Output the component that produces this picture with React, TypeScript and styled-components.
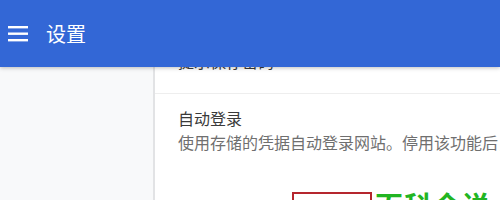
import React from 'react';
import styled, { createGlobalStyle } from 'styled-components';

const Global = createGlobalStyle`
  html, body {
    margin: 0;
    padding: 0;
    width: 500px;
    height: 200px;
    overflow: hidden;
    background: #f8f9fa;
    font-family: 'Noto Sans CJK SC', 'Liberation Sans', sans-serif;
  }
`;

const Page = styled.div`
  width: 500px;
  height: 200px;
  display: flex;
  flex-direction: column;
  position: relative;
  overflow: hidden;
`;

const Header = styled.header`
  height: 67px;
  flex: none;
  background: #3367d6;
  display: flex;
  align-items: center;
  padding-left: 8px;
  gap: 17px;
  position: relative;
  z-index: 2;
  box-shadow: 0 1px 4px rgba(0, 0, 0, 0.25);
`;

const Title = styled.h1`
  margin: 0;
  font-size: 20px;
  font-weight: 400;
  color: #ffffff;
  line-height: 1;
`;

const Body = styled.div`
  flex: 1;
  display: flex;
  min-height: 0;
`;

const Sidebar = styled.aside`
  width: 153px;
  flex: none;
  background: #f8f9fa;
`;

const Card = styled.section`
  flex: 1;
  background: #ffffff;
  border-left: 2px solid #e2e3e5;
  min-width: 0;
  overflow: hidden;
`;

// content scrolled up a little, first row sits under the header
const Scroller = styled.div`
  margin-top: -18px;
`;

const Row = styled.div<{ $divider?: boolean }>`
  padding: 0 0 0 23px;
  border-bottom: ${p => (p.$divider ? '1px solid #eeeeee' : 'none')};
`;

const FirstRow = styled(Row)`
  height: 44px;
`;

const SettingRow = styled(Row)`
  padding-top: 12px;
`;

const Label = styled.div`
  font-size: 16px;
  line-height: 24px;
  color: #3a3a3a;
  white-space: nowrap;
`;

const Sub = styled.div`
  font-size: 16px;
  line-height: 24px;
  color: #6f6f6f;
  white-space: nowrap;
`;

const Watermark = styled.div`
  position: absolute;
  left: 292px;
  top: 186px;
  display: flex;
  align-items: flex-start;
  gap: 3px;
  z-index: 3;
`;

const RedBox = styled.div`
  margin-top: 6px;
  width: 76px;
  height: 30px;
  border: 2px solid #b5262e;
`;

const Brand = styled.span`
  margin-top: 4px;
  font-size: 28px;
  line-height: 30px;
  font-weight: 700;
  color: #22b522;
  letter-spacing: 1px;
  white-space: nowrap;
`;

const MenuIcon = () => (
  <svg width="21" height="16" viewBox="0 0 21 16">
    <rect x="0" y="0" width="20" height="2.4" fill="#fff" />
    <rect x="0" y="6.5" width="20" height="2.4" fill="#fff" />
    <rect x="0" y="13" width="20" height="2.4" fill="#fff" />
  </svg>
);

export default function App() {
  return (
    <Page>
      <Global />
      <Header>
        <MenuIcon />
        <Title>设置</Title>
      </Header>
      <Body>
        <Sidebar />
        <Card>
          <Scroller>
            <FirstRow $divider>
              <Label>提示保存密码</Label>
            </FirstRow>
            <SettingRow>
              <Label>自动登录</Label>
              <Sub>使用存储的凭据自动登录网站。停用该功能后，每次登录网站时都需要确认。</Sub>
            </SettingRow>
          </Scroller>
        </Card>
      </Body>
      <Watermark>
        <RedBox />
        <Brand>百科全说</Brand>
      </Watermark>
    </Page>
  );
}
